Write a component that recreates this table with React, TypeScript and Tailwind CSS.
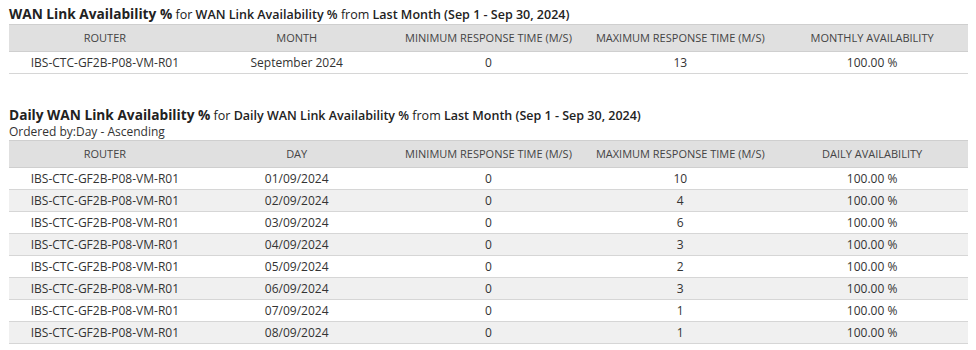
const monthlyRows = [
  { router: 'IBS-CTC-GF2B-P08-VM-R01', month: 'September 2024', min: 0, max: 13, avail: '100.00 %' },
];

const dailyRows = [
  { day: '01/09/2024', max: 10 },
  { day: '02/09/2024', max: 4 },
  { day: '03/09/2024', max: 6 },
  { day: '04/09/2024', max: 3 },
  { day: '05/09/2024', max: 2 },
  { day: '06/09/2024', max: 3 },
  { day: '07/09/2024', max: 1 },
  { day: '08/09/2024', max: 1 },
];

function ReportTitle({ name, range }: { name: string; range: string }) {
  return (
    <h2 className="h-[17px] whitespace-nowrap text-[12.5px] leading-[17px] text-[#222]">
      <span className="text-[13.7px] leading-[17px] font-bold">{name}</span>
      <span> for </span>
      <span className="font-semibold">{name}</span>
      <span> from </span>
      <span className="font-semibold">{range}</span>
    </h2>
  );
}

function ReportTable({ headers, rows }: { headers: string[]; rows: (string | number)[][] }) {
  return (
    <table className="w-[959px] table-fixed border-collapse text-center text-[#333]">
      <thead>
        <tr className="h-[27px] border-t border-b border-[#cfcfcf] bg-[#e0e0e0]">
          {headers.map(h => (
            <th key={h} className="p-0 text-[11px] font-normal uppercase text-[#444]">{h}</th>
          ))}
        </tr>
      </thead>
      <tbody>
        {rows.map((r, i) => (
          <tr key={i} className={`h-[22px] border-b border-[#d6d6d6] ${i % 2 === 1 ? 'bg-[#f0f0f0]' : 'bg-white'}`}>
            {r.map((c, j) => (
              <td key={j} className="p-0 text-[12px]">{c}</td>
            ))}
          </tr>
        ))}
      </tbody>
    </table>
  );
}

export default function App() {
  const range = 'Last Month (Sep 1 - Sep 30, 2024)';
  return (
    <div className="min-h-[350px] w-[976px] bg-white pl-[9px] pt-[5px]" style={{ fontFamily: '"Open Sans", "Liberation Sans", sans-serif' }}>
      {/* Monthly */}
      <ReportTitle name="WAN Link Availability %" range={range} />
      <div className="mt-[2px]">
        <ReportTable
          headers={['Router', 'Month', 'Minimum Response Time (M/S)', 'Maximum Response Time (M/S)', 'Monthly Availability']}
          rows={monthlyRows.map(r => [r.router, r.month, r.min, r.max, r.avail])}
        />
      </div>

      {/* Daily */}
      <div className="mt-[32px]">
        <ReportTitle name="Daily WAN Link Availability %" range={range} />
        <p className="h-[17px] pt-[1px] text-[12px] leading-[16px] text-[#333]">Ordered by:Day - Ascending</p>
        <ReportTable
          headers={['Router', 'Day', 'Minimum Response Time (M/S)', 'Maximum Response Time (M/S)', 'Daily Availability']}
          rows={dailyRows.map(r => ['IBS-CTC-GF2B-P08-VM-R01', r.day, 0, r.max, '100.00 %'])}
        />
      </div>
    </div>
  );
}
